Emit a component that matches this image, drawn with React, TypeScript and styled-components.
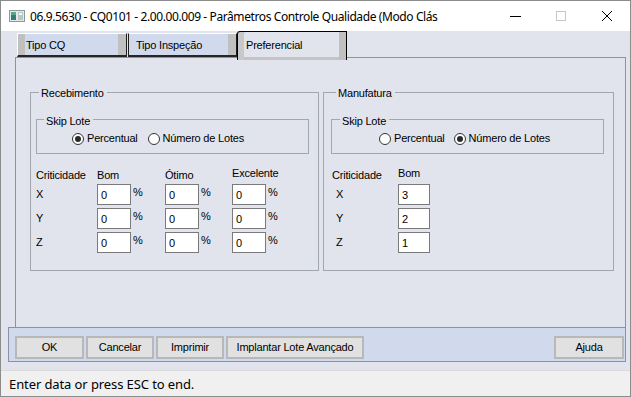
import React from 'react';
import styled, { createGlobalStyle } from 'styled-components';

const Global = createGlobalStyle`
  html, body { margin: 0; padding: 0; background: #fff; overflow: hidden; }
  * { box-sizing: border-box; }
`;

const UI = `"Liberation Sans", Arial, sans-serif`;
const SEGOE = `"Noto Sans", "Open Sans", sans-serif`;

const Window = styled.div`
  width: 631px;
  height: 397px;
  border: 1px solid #8c8c8c;
  display: flex;
  flex-direction: column;
  background: #e1e4ec;
  font-family: ${UI};
  font-size: 11px;
  letter-spacing: -0.2px;
  color: #000;
`;

const TitleBar = styled.div`
  height: 30px;
  flex: none;
  background: #fff;
  display: flex;
  align-items: center;
  padding-left: 8px;
`;

const TitleIcon = styled.svg`
  width: 16px;
  height: 12px;
  flex: none;
`;

const TitleText = styled.div`
  font-family: ${SEGOE};
  font-size: 12px;
  letter-spacing: -0.4px;
  margin-left: 5px;
  white-space: nowrap;
  color: #000;
`;

const Controls = styled.div`
  margin-left: auto;
  display: flex;
  height: 100%;
`;

const CtrlButton = styled.div`
  width: 46px;
  height: 100%;
  display: flex;
  align-items: center;
  justify-content: center;
`;

const Body = styled.div`
  flex: 1;
  display: flex;
  flex-direction: column;
  padding: 0 4px 0 7px;
`;

const TabStrip = styled.div`
  height: 26px;
  flex: none;
  display: flex;
  align-items: flex-end;
  padding-left: 9px;
  position: relative;
  z-index: 2;
`;

const Tab = styled.div<{ $active?: boolean; $leftBar?: boolean; $w: number; $gap?: number }>`
  width: ${p => p.$w}px;
  margin-left: ${p => p.$gap ?? 0}px;
  height: ${p => (p.$active ? 29 : 24)}px;
  margin-bottom: ${p => (p.$active ? -3 : 0)}px;
  position: relative;
  padding-left: ${p => (p.$active ? 8 : p.$leftBar ? 8 : 7)}px;
  padding-top: ${p => (p.$active ? 7 : 5)}px;
  line-height: 13px;
  white-space: nowrap;
  background: ${p => (p.$active ? '#e1e4ec' : '#d0daec')};
  border-top: 1px solid ${p => (p.$active ? '#000' : '#fff')};
  border-left: 1px solid ${p => (p.$active ? '#000' : p.$leftBar ? '#fff' : '#1e1e1e')};
  border-right: 1px solid ${p => (p.$active ? '#000' : '#1e1e1e')};
  border-bottom: ${p => (p.$active ? 'none' : '2px solid #262626')};
  border-top-left-radius: ${p => (p.$active ? 3 : 0)}px;
  box-shadow: ${p =>
    p.$active
      ? 'inset 6px 0 0 #c8c8c8, inset -7px 0 0 #c0c0c0, inset 0 -3px 0 #c4c4c4'
      : p.$leftBar
      ? 'inset 7px 0 0 #c0c0c0, inset -8px 0 0 #c0c0c0'
      : 'inset -8px 0 0 #c0c0c0'};
`;

const Panel = styled.div`
  height: 270px;
  flex: none;
  margin-left: 7px;
  border: 1px solid #8a92a4;
  border-bottom: none;
  padding: 34px 11px 0 14px;
  display: flex;
  gap: 4px;
  align-items: flex-start;
`;

const GroupBox = styled.div<{ $w: number; $pad: number }>`
  position: relative;
  width: ${p => p.$w}px;
  height: 179px;
  border: 1px solid #a2a6ae;
  padding: 26px 9px 0 ${p => p.$pad}px;
`;

const Legend = styled.span<{ $left: number; $top: number }>`
  position: absolute;
  left: ${p => p.$left}px;
  top: ${p => p.$top}px;
  padding: 0 3px 0 2px;
  line-height: 13px;
  background: #e1e4ec;
  white-space: nowrap;
`;

const SkipBox = styled.div<{ $indent: number }>`
  position: relative;
  height: 35px;
  border: 1px solid #a2a6ae;
  padding: 12px 0 0 ${p => p.$indent}px;
`;

const RadioRow = styled.div`
  display: flex;
  align-items: center;
  height: 13px;
`;

const RadioItem = styled.label<{ $gap?: number }>`
  display: flex;
  align-items: center;
  gap: 3px;
  margin-left: ${p => p.$gap ?? 0}px;
  white-space: nowrap;
  line-height: 13px;
`;

const RadioCircle = styled.span<{ $checked?: boolean }>`
  width: 12px;
  height: 12px;
  border-radius: 50%;
  border: 1px solid #333;
  background: #fff;
  display: flex;
  align-items: center;
  justify-content: center;
  flex: none;
  &::after {
    content: '';
    width: 6px;
    height: 6px;
    border-radius: 50%;
    background: ${p => (p.$checked ? '#2a2a2a' : 'transparent')};
  }
`;

const Table = styled.div<{ $cols: string; $indent: number }>`
  margin-top: 15px;
  padding-left: ${p => p.$indent}px;
  display: grid;
  grid-template-columns: ${p => p.$cols};
  grid-template-rows: 12px repeat(3, 21px);
  row-gap: 3px;
`;

const HeadCell = styled.div<{ $lift?: number }>`
  line-height: 12px;
  white-space: nowrap;
  margin-top: ${p => -(p.$lift ?? 0)}px;
`;

const RowLabel = styled.div<{ $indent?: number }>`
  display: flex;
  align-items: center;
  padding-left: ${p => p.$indent ?? 0}px;
  line-height: 13px;
`;

const Cell = styled.div`
  display: flex;
  align-items: flex-start;
  gap: 2px;
`;

const Field = styled.input<{ $w: number }>`
  width: ${p => p.$w}px;
  height: 21px;
  border: 1px solid #7a7a7a;
  background: #fff;
  padding: 0 0 0 3px;
  margin: 0;
  font-family: ${UI};
  font-size: 11px;
  color: #000;
  outline: none;
`;

const Percent = styled.span`
  margin-top: 2px;
  line-height: 13px;
`;

const ButtonBar = styled.div`
  height: 35px;
  flex: none;
  border: 1px solid #8a92a4;
  background: #d0daec;
  padding: 8px 1px 0 6px;
  display: flex;
  align-items: flex-start;
  gap: 2px;
`;

const Button = styled.div<{ $w: number; $right?: boolean }>`
  width: ${p => p.$w}px;
  height: 23px;
  margin-left: ${p => (p.$right ? 'auto' : '0')};
  border: 2px solid #b8b8b8;
  background: #e1e1e1;
  display: flex;
  align-items: center;
  justify-content: center;
  white-space: nowrap;
  line-height: 13px;
`;

const StatusBar = styled.div`
  height: 26px;
  flex: none;
  border-top: 1px solid #dadada;
  background: #f0f0f0;
  padding-left: 8px;
  display: flex;
  align-items: center;
  font-family: ${SEGOE};
  font-size: 13px;
  letter-spacing: -0.1px;
`;

type Row = { label: string; values: string[] };

const recRows: Row[] = [
  { label: 'X', values: ['0', '0', '0'] },
  { label: 'Y', values: ['0', '0', '0'] },
  { label: 'Z', values: ['0', '0', '0'] },
];

const manRows: Row[] = [
  { label: 'X', values: ['3'] },
  { label: 'Y', values: ['2'] },
  { label: 'Z', values: ['1'] },
];

export default function App() {
  return (
    <>
      <Global />
      <Window>
        <TitleBar>
          <TitleIcon viewBox="0 0 16 12">
            <rect x="0.5" y="0.5" width="15" height="11" fill="#e4eaea" stroke="#8b9999" />
            <rect x="2" y="2" width="5" height="8" fill="#2f7f73" />
            <rect x="2" y="2" width="5" height="3" fill="#5aa58f" />
            <rect x="9" y="2" width="5" height="8" fill="#b9c6c6" />
            <rect x="10" y="3" width="3" height="2" fill="#f4f7f7" />
          </TitleIcon>
          <TitleText>06.9.5630 - CQ0101 - 2.00.00.009 - Parâmetros Controle Qualidade (Modo Clás</TitleText>
          <Controls>
            <CtrlButton>
              <svg width="12" height="12" viewBox="0 0 12 12">
                <line x1="1" y1="6.5" x2="12" y2="6.5" stroke="#000" strokeWidth="1" />
              </svg>
            </CtrlButton>
            <CtrlButton>
              <svg width="12" height="12" viewBox="0 0 12 12">
                <rect x="1.5" y="1.5" width="9" height="9" fill="none" stroke="#c6c6c6" strokeWidth="1" />
              </svg>
            </CtrlButton>
            <CtrlButton>
              <svg width="12" height="12" viewBox="0 0 12 12">
                <path d="M1 1 L11 11 M11 1 L1 11" stroke="#000" strokeWidth="1" />
              </svg>
            </CtrlButton>
          </Controls>
        </TitleBar>
        <Body>
          <TabStrip>
            <Tab $w={110} $leftBar>Tipo CQ</Tab>
            <Tab $w={109} $gap={1}>Tipo Inspeção</Tab>
            <Tab $w={110} $active>Preferencial</Tab>
          </TabStrip>
          <Panel>
            <GroupBox $w={289} $pad={5}>
              <Legend $left={8} $top={-6}>Recebimento</Legend>
              <SkipBox $indent={35}>
                <Legend $left={7} $top={-5}>Skip Lote</Legend>
                <RadioRow>
                  <RadioItem>
                    <RadioCircle $checked />
                    Percentual
                  </RadioItem>
                  <RadioItem $gap={10}>
                    <RadioCircle />
                    Número de Lotes
                  </RadioItem>
                </RadioRow>
              </SkipBox>
              <Table $cols="61px 68px 67px 68px" $indent={0}>
                <HeadCell>Criticidade</HeadCell>
                <HeadCell>Bom</HeadCell>
                <HeadCell>Ótimo</HeadCell>
                <HeadCell $lift={2}>Excelente</HeadCell>
                {recRows.map(r => (
                  <React.Fragment key={r.label}>
                    <RowLabel>{r.label}</RowLabel>
                    {r.values.map((v, i) => (
                      <Cell key={i}>
                        <Field $w={34} value={v} readOnly />
                        <Percent>%</Percent>
                      </Cell>
                    ))}
                  </React.Fragment>
                ))}
              </Table>
            </GroupBox>
            <GroupBox $w={291} $pad={7}>
              <Legend $left={12} $top={-6}>Manufatura</Legend>
              <SkipBox $indent={47}>
                <Legend $left={8} $top={-5}>Skip Lote</Legend>
                <RadioRow>
                  <RadioItem>
                    <RadioCircle />
                    Percentual
                  </RadioItem>
                  <RadioItem $gap={9}>
                    <RadioCircle $checked />
                    Número de Lotes
                  </RadioItem>
                </RadioRow>
              </SkipBox>
              <Table $cols="66px 40px" $indent={1}>
                <HeadCell>Criticidade</HeadCell>
                <HeadCell $lift={2}>Bom</HeadCell>
                {manRows.map(r => (
                  <React.Fragment key={r.label}>
                    <RowLabel $indent={4}>{r.label}</RowLabel>
                    {r.values.map((v, i) => (
                      <Cell key={i}>
                        <Field $w={32} value={v} readOnly />
                      </Cell>
                    ))}
                  </React.Fragment>
                ))}
              </Table>
            </GroupBox>
          </Panel>
          <ButtonBar>
            <Button $w={69}>OK</Button>
            <Button $w={68}>Cancelar</Button>
            <Button $w={68}>Imprimir</Button>
            <Button $w={138}>Implantar Lote Avançado</Button>
            <Button $w={70} $right>Ajuda</Button>
          </ButtonBar>
        </Body>
        <StatusBar>Enter data or press ESC to end.</StatusBar>
      </Window>
    </>
  );
}
